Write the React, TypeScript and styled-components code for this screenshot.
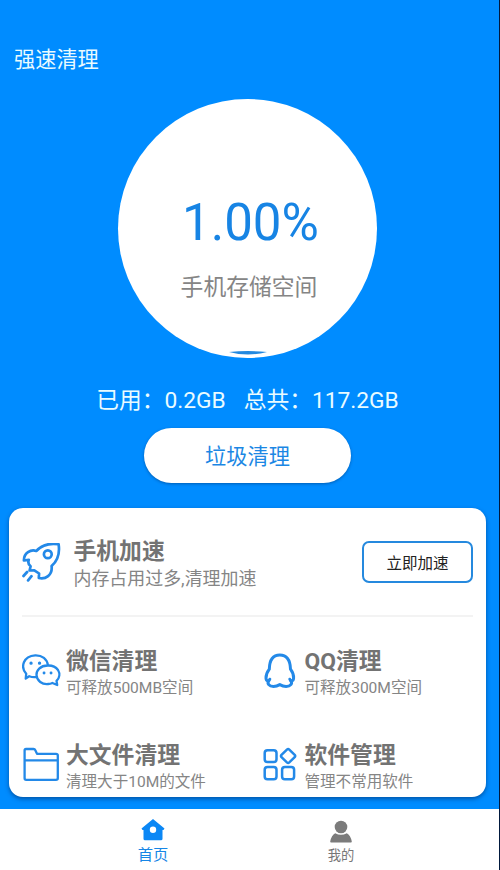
import React from "react"
import styled, { createGlobalStyle } from 'styled-components'

const GlobalStyle = createGlobalStyle`
* {
    box-sizing: border-box;
}
body {
    margin: 0;
    background-color: #008cff;
    font-family: Roboto, "Noto Sans CJK SC", sans-serif;
}
h1, h2, h3, p {
    margin: 0;
    font-weight: 400;
}
button {
    font-family: inherit;
    padding: 0;
}
`

const Screen = styled.div`
display: flex;
flex-direction: column;
width: 500px;
height: 870px;
background-color: #008cff;
border-right: 1px solid #00183c;
overflow: hidden;
white-space: nowrap;
`

const Header = styled.header`
padding: 44px 0 0 14px;
height: 99px;
`

const Title = styled.h1`
font-size: 21.2px;
line-height: 32px;
color: #e9fbff;
`

const Summary = styled.section`
display: flex;
flex-direction: column;
align-items: center;
width: 495px;
height: 409px;
`

const Gauge = styled.div`
display: flex;
flex-direction: column;
align-items: center;
width: 259px;
height: 259px;
padding-top: 94px;
border-radius: 50%;
background-color: white;
`

const Percent = styled.div`
font-size: 51px;
line-height: 60px;
color: #1784e4;
padding-left: 6px;
`

const GaugeLabel = styled.p`
margin-top: 18px;
padding-left: 3px;
font-size: 22.8px;
line-height: 34px;
color: #858585;
`

const Wave = styled.svg`
margin-top: 46px;
width: 38px;
height: 4px;
`

const Stats = styled.div`
display: flex;
gap: 18px;
margin-top: 26px;
font-size: 22.75px;
line-height: 34px;
color: #e9fbff;
`

const CleanButton = styled.button`
margin-top: 10px;
width: 207px;
height: 55px;
padding-bottom: 2px;
border: none;
border-radius: 28px;
background-color: white;
box-shadow: 0 1px 3px rgba(0, 40, 90, 0.45);
font-size: 21.2px;
color: #1b87e4;
`

const Card = styled.section`
width: 477px;
height: 289px;
margin-left: 9px;
padding: 0 13px;
border-radius: 14px;
background-color: white;
box-shadow: 0 2px 4px rgba(0, 30, 80, 0.5);
`

const BoostRow = styled.div`
display: flex;
align-items: center;
height: 109px;
border-bottom: 2px solid #f3f3f3;
`

const BoostText = styled.div`
flex: 1;
margin-left: 11.5px;
padding-top: 6px;
`

const BoostButton = styled.button`
width: 111px;
height: 42px;
border: 2px solid #2589de;
border-radius: 7px;
background-color: white;
font-size: 15.5px;
color: #222222;
`

const ItemTitle = styled.h2`
font-size: 22.8px;
font-weight: 700;
line-height: 28px;
color: #737373;
`

const ItemCaption = styled.p<{ $small?: boolean }>`
font-size: ${props => props.$small ? 15.55 : 17.95}px;
line-height: ${props => props.$small ? 24 : 26}px;
color: #858585;
`

const Grid = styled.div`
display: grid;
grid-template-columns: 238.5px 1fr;
grid-auto-rows: 94px;
padding-top: 30px;
`

const Item = styled.div`
display: flex;
align-items: flex-start;
gap: 4px;
`

const ItemText = styled.div`
padding-top: 1px;
`

const ItemIcon = styled.svg<{ $stroke?: number }>`
display: block;
flex: none;
width: 40px;
height: 40px;
margin-top: 3px;
fill: none;
stroke: #2389e8;
stroke-width: ${props => props.$stroke || 2.3};
stroke-linecap: round;
stroke-linejoin: round;
`

const TabBar = styled.nav`
display: flex;
width: 100%;
height: 61px;
margin-top: 12px;
padding-left: 59px;
background-color: white;
`

const Tab = styled.div<{ $active?: boolean }>`
display: flex;
flex-direction: column;
align-items: center;
width: 188px;
padding-top: ${props => props.$active ? 8 : 9}px;
font-size: ${props => props.$active ? 15.3 : 13.3}px;
line-height: 24px;
color: ${props => props.$active ? '#1686e6' : '#777777'};
`

const TabIcon = styled.svg`
display: block;
width: 24px;
height: 26px;
`

const Rocket = () => (
    <ItemIcon viewBox="0.7 1 40 40" $stroke={2.7}>
        <path d="M37.3 2.2C29 1 20.5 3 15 9C9.5 7 2.5 11 2.6 18.5L7.5 17.8C6.5 20.5 7 22.5 9.3 24.3L8.3 28.5L13 28.3L17.8 31.5L17.5 36C24 37.5 31.5 33.5 30.3 24C36.5 18.5 38.5 10 37.3 2.2Z" />
        <circle cx="26.5" cy="12.2" r="3.9" />
        <path d="M5.8 30L2.2 34M10.2 34.2L6.8 38.4" />
    </ItemIcon>
)

const Wechat = () => (
    <ItemIcon viewBox="0.8 0 40 40">
        <path d="M15.5 27C12 27.6 10 27 8 26.2L4.5 28.5L5 23.8C-1 17 2 6 14 5.3C21 5 26 9.5 26.6 15" />
        <path d="M26.5 15.5C19 15.5 15 20.5 15.3 25C15.6 31 21 34.6 27 34C29 34 30 33.6 31.2 33L36 35L35.3 30.8C38.5 28 39 23.5 36.8 20C34.5 16.8 31 15.3 26.5 15.5Z" />
        <path strokeWidth="3.2" d="M9.8 13.2H9.9M18.3 13.2H18.4" />
        <path strokeWidth="2.8" d="M22.8 23H22.9M29.8 23H29.9" />
    </ItemIcon>
)

const Penguin = () => (
    <ItemIcon viewBox="0 0 40 40" $stroke={3}>
        <path d="M8.8 29.2C7.8 31.8 5.2 31.2 5 28.2C4.9 25 6.2 22 8.3 19.2C8.5 9.5 12 5 18.8 5C25.6 5 29.2 9.5 29.5 19.2C31.6 22 32.8 25 32.6 28.2C32.4 31.2 29.8 31.8 28.8 29.2" />
        <path d="M7.8 30.8C5.8 33.5 8 36.4 12.5 36.5C15.3 36.5 17.3 35.5 18.8 34.6C20.3 35.5 22.3 36.5 25.1 36.5C29.6 36.4 31.8 33.5 29.8 30.8" />
    </ItemIcon>
)

const Folder = () => (
    <ItemIcon viewBox="0 0 40 40">
        <path d="M2.6 6.5Q2.6 5 4 5H11.5Q12.8 5 13.2 6L15 9.8H34Q35.8 9.8 35.8 11.3V34.3Q35.8 35.8 34 35.8H4.2Q2.6 35.8 2.6 34.3ZM2.6 16.3H35.8" />
    </ItemIcon>
)

const Apps = () => (
    <ItemIcon viewBox="0.5 0 40 40" $stroke={2.5}>
        <rect x="4.2" y="6.2" width="11.8" height="11.8" rx="2.8" />
        <rect x="4.2" y="23" width="11.8" height="12.2" rx="2.8" />
        <rect x="21.6" y="23" width="12" height="12.2" rx="2.8" />
        <path d="M26.4 5.6Q27.6 4.5 28.8 5.6L34.2 10.8Q35.2 12 34.2 13.2L28.8 18.4Q27.6 19.5 26.4 18.4L21 13.2Q20 12 21 10.8Z" />
    </ItemIcon>
)

const items = [
    { icon: <Wechat />, title: '微信清理', caption: '可释放500MB空间' },
    { icon: <Penguin />, title: 'QQ清理', caption: '可释放300M空间' },
    { icon: <Folder />, title: '大文件清理', caption: '清理大于10M的文件' },
    { icon: <Apps />, title: '软件管理', caption: '管理不常用软件' },
]

const App = (): JSX.Element => (
    <>
        <GlobalStyle />
        <Screen>
            <Header>
                <Title>强速清理</Title>
            </Header>

            <Summary>
                <Gauge>
                    <Percent>1.00%</Percent>
                    <GaugeLabel>手机存储空间</GaugeLabel>
                    <Wave viewBox="0 0 38 4">
                        <path d="M0 1Q19 -0.8 38 1Q19 6 0 1Z" fill="#2389e0" />
                    </Wave>
                </Gauge>
                <Stats>
                    <span>已用：0.2GB</span>
                    <span>总共：117.2GB</span>
                </Stats>
                <CleanButton>垃圾清理</CleanButton>
            </Summary>

            <Card>
                <BoostRow>
                    <Rocket />
                    <BoostText>
                        <ItemTitle>手机加速</ItemTitle>
                        <ItemCaption>内存占用过多,清理加速</ItemCaption>
                    </BoostText>
                    <BoostButton>立即加速</BoostButton>
                </BoostRow>
                <Grid>
                    {items.map(item => (
                        <Item key={item.title}>
                            {item.icon}
                            <ItemText>
                                <ItemTitle>{item.title}</ItemTitle>
                                <ItemCaption $small>{item.caption}</ItemCaption>
                            </ItemText>
                        </Item>
                    ))}
                </Grid>
            </Card>

            <TabBar>
                <Tab $active>
                    <TabIcon viewBox="0 0 24 26">
                        <path fillRule="evenodd" fill="#0b87f5" d="M12 2L23.5 11.5L22.5 13H21.5V21.8Q21.5 23.3 20 23.3H4Q2.5 23.3 2.5 21.8V13H1.5L0.5 11.5ZM12 9.5A3.2 3.2 0 1 0 12 15.9A3.2 3.2 0 1 0 12 9.5Z" />
                    </TabIcon>
                    首页
                </Tab>
                <Tab>
                    <TabIcon viewBox="0 0 24 26">
                        <circle cx="12" cy="9" r="6.3" fill="#7b7b7b" />
                        <path fill="#7b7b7b" d="M6.2 15.2Q12 18.4 17.8 15.2Q21.5 17 22.8 23.5Q22.8 24.4 22 24.4H2Q1.2 24.4 1.2 23.5Q2.5 17 6.2 15.2Z" />
                    </TabIcon>
                    我的
                </Tab>
            </TabBar>
        </Screen>
    </>
)

export default App
